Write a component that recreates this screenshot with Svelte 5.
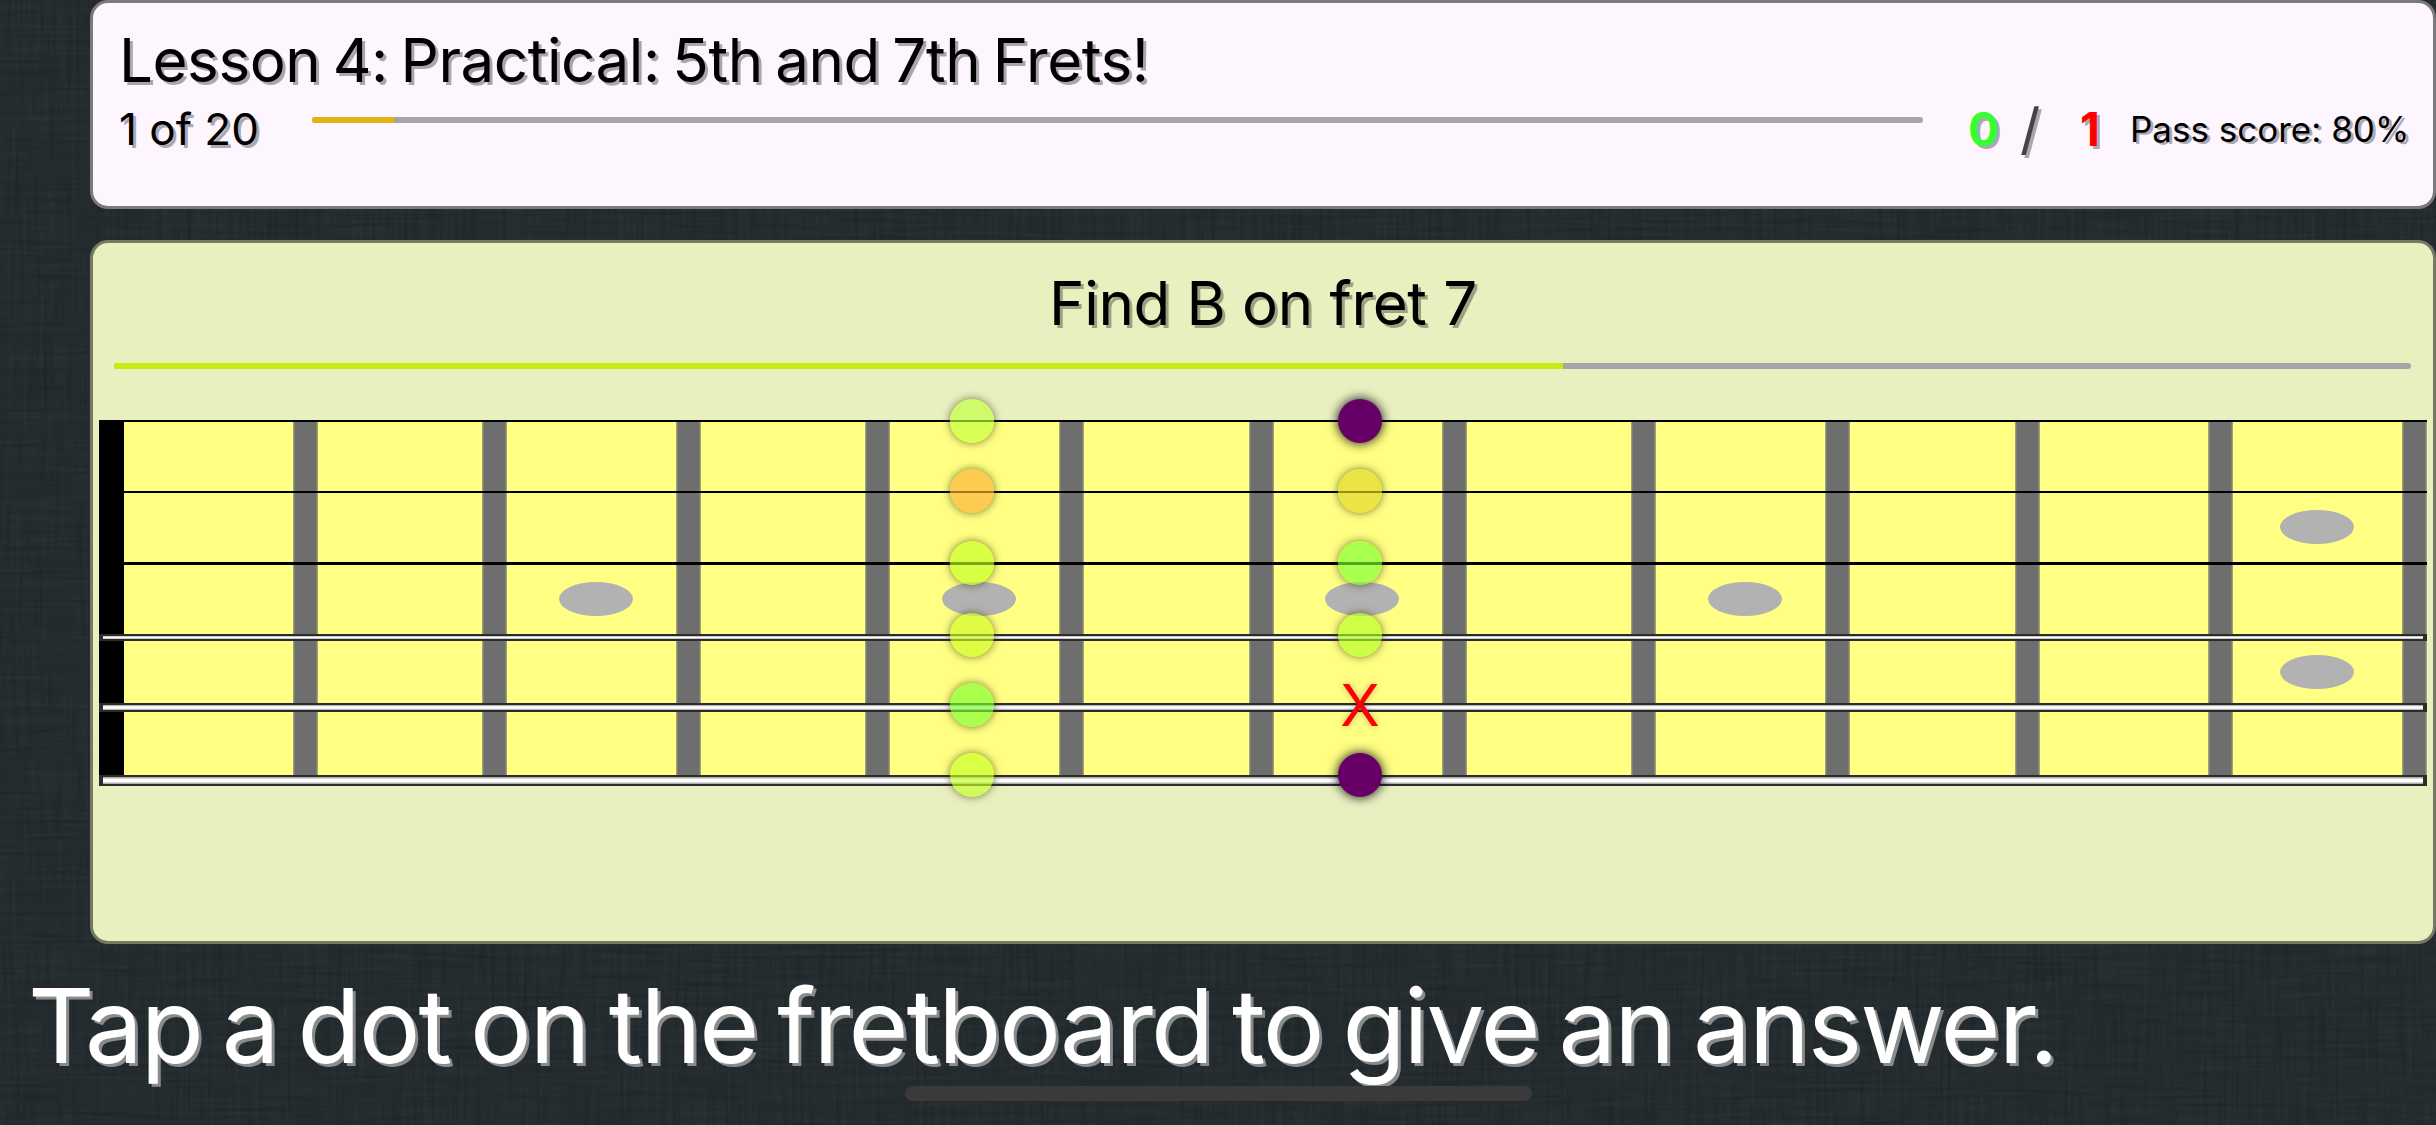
<script>
	// left edge of each fret, measured along the neck; last one closes the board
	const frets = [293, 482, 676, 865, 1059, 1249, 1442, 1631, 1825, 2015, 2208, 2402];
	const boardLeft = 99;
	const nutWidth = 25;
	const fretWidth = 25;

	const cells = frets.map((left, i) => {
		const start = i === 0 ? boardLeft + nutWidth : frets[i - 1] + fretWidth;
		return left - start;
	});

	const strings = [
		{ top: 0, height: 2, wound: false },
		{ top: 71, height: 2, wound: false },
		{ top: 142, height: 3, wound: false },
		{ top: 214, height: 7, wound: true },
		{ top: 283, height: 9, wound: true },
		{ top: 355, height: 11, wound: true }
	];

	const inlays = [
		{ x: 596, y: 179 },
		{ x: 979, y: 179 },
		{ x: 1362, y: 179 },
		{ x: 1745, y: 179 },
		{ x: 2317, y: 107 },
		{ x: 2317, y: 252 }
	];

	const rows = [1, 71, 143, 215, 285, 355];
	const colA = ['194,255,60', '252,175,52', '194,255,34', '208,249,34', '123,255,46', '198,255,38'];
	const colB = ['#660066', 'rgba(225,214,34,.65)', 'rgba(123,255,46,.65)', 'rgba(178,255,34,.65)', null, '#660066'];
</script>

<main class="screen">
	<svg class="weave" width="2436" height="1125" aria-hidden="true">
		<filter id="linen" x="0" y="0" width="100%" height="100%">
			<feTurbulence type="fractalNoise" baseFrequency="0.25 0.012" numOctaves="2" seed="4" result="warp" />
			<feTurbulence type="fractalNoise" baseFrequency="0.012 0.25" numOctaves="2" seed="9" result="weft" />
			<feBlend in="warp" in2="weft" mode="multiply" />
			<feColorMatrix type="matrix" values="0 0 0 0 .55  0 0 0 0 .68  0 0 0 0 .72  1.1 1.1 0 0 -.32" />
		</filter>
		<rect width="2436" height="1125" filter="url(#linen)" opacity=".07" />
	</svg>

	<section class="card header">
		<h1>Lesson 4: Practical: 5th and 7th Frets!</h1>
		<div class="status">
			<span class="count">1 of 20</span>
			<div class="bar lesson"><div class="bar-fill"></div></div>
			<div class="score">
				<span class="right">0</span>
				<span class="slash">/</span>
				<span class="wrong">1</span>
			</div>
			<span class="pass">Pass score: 80%</span>
		</div>
	</section>

	<section class="card game">
		<h2>Find B on fret 7</h2>
		<div class="bar timer"><div class="bar-fill"></div></div>

		<div class="board">
			<div class="nut"></div>
			{#each cells as width}
				<div class="cell" style="width: {width}px"></div>
				<div class="fret"></div>
			{/each}

			{#each inlays as dot}
				<div class="inlay" style="left: {dot.x - boardLeft}px; top: {dot.y}px"></div>
			{/each}

			{#each strings as s}
				<div class="string" class:wound={s.wound} style="top: {s.top}px; height: {s.height}px"></div>
			{/each}

			{#each rows as y, i}
				<button class="dot" style="left: 873px; top: {y}px; background: rgba({colA[i]},.65)" aria-label="answer"></button>
				{#if colB[i]}
					<button class="dot" class:picked={colB[i] === '#660066'} style="left: 1261px; top: {y}px; background: {colB[i]}" aria-label="answer"></button>
				{:else}
					<span class="miss" style="top: {y}px">X</span>
				{/if}
			{/each}
		</div>
	</section>

	<p class="prompt">Tap a dot on the fretboard to give an answer.</p>
	<div class="home"></div>
</main>

<style>
	:global(body) {
		margin: 0;
		background: #1d2428;
	}

	.screen {
		position: relative;
		box-sizing: border-box;
		width: 2436px;
		height: 1125px;
		overflow: hidden;
		padding-left: 90px;
		font-family: Inter, "Liberation Sans", sans-serif;
		background-color: #1d2428;
	}

	.weave {
		position: absolute;
		left: 0;
		top: 0;
	}

	.card {
		position: relative;
		box-sizing: border-box;
		width: 2346px;
		border: 3px solid;
		border-radius: 18px;
	}

	.header {
		height: 209px;
		padding: 22px 14px 0 26px;
		background: #fdf6fe;
		border-color: #7c787c;
		color: #000;
	}

	h1 {
		margin: 0;
		font-size: 60px;
		font-weight: 400;
		line-height: 70px;
		letter-spacing: -.4px;
		word-spacing: -4px;
		text-shadow: 3px 3px 0 rgba(0,0,0,.33);
	}

	.status {
		display: flex;
		align-items: flex-start;
		margin-top: 7px;
	}

	.count {
		width: 193px;
		font-size: 44px;
		line-height: 54px;
		text-shadow: 3px 3px 0 rgba(0,0,0,.33);
	}

	.bar {
		height: 6px;
		border-radius: 3px;
		background: #a7a5a7;
		overflow: hidden;
	}

	.bar-fill {
		height: 100%;
	}

	.lesson {
		width: 1611px;
		margin-top: 15px;
	}

	.lesson .bar-fill {
		width: 82px;
		background: #e3b215;
	}

	.score {
		display: flex;
		margin-left: 45px;
		font-size: 46px;
		line-height: 54px;
		font-weight: 700;
		text-shadow: 3px 3px 0 rgba(0,0,0,.33);
	}

	.right {
		color: #33ff33;
		width: 52px;
	}

	.slash {
		color: #444;
		font-size: 56px;
		font-weight: 400;
		width: 60px;
	}

	.wrong {
		color: #ff0000;
		width: 50px;
	}

	.pass {
		font-size: 35px;
		line-height: 54px;
		text-shadow: 3px 2px 0 rgba(0,0,0,.33);
	}

	.game {
		height: 704px;
		margin-top: 31px;
		background: #e9f0c0;
		border-color: #767a62;
	}

	h2 {
		margin: 24px 0 0;
		text-align: center;
		font-size: 60px;
		font-weight: 400;
		line-height: 72px;
		letter-spacing: -.3px;
		color: #000;
		text-shadow: 3px 3px 0 rgba(0,0,0,.33);
	}

	.timer {
		width: 2297px;
		margin: 24px 0 0 21px;
	}

	.timer .bar-fill {
		width: 1449px;
		background: #c6ec10;
	}

	.board {
		position: relative;
		display: flex;
		width: 2328px;
		height: 366px;
		margin: 51px 0 0 6px;
		background: #ffff84;
	}

	.nut {
		width: 25px;
		background: #000;
	}

	.cell {
		height: 100%;
	}

	.fret {
		width: 25px;
		background: linear-gradient(90deg, #b3b37a 0, #6e6e6e 2px, #6e6e6e calc(100% - 2px), #b3b37a 100%);
	}

	.inlay {
		position: absolute;
		width: 74px;
		height: 34px;
		margin: -17px 0 0 -37px;
		border-radius: 50%;
		background: #b2b2b2;
		filter: blur(.6px);
	}

	.string {
		position: absolute;
		left: 0;
		right: 0;
		background: #000;
	}

	.wound {
		box-sizing: border-box;
		border: solid #2c2c2c;
		border-width: 2px 4px;
		background: linear-gradient(#999, #fff 35%, #fff 65%, #999);
	}

	.dot {
		position: absolute;
		width: 44px;
		height: 44px;
		margin: -22px 0 0 -22px;
		padding: 0;
		border: 0;
		border-radius: 50%;
		box-shadow: 0 0 8px rgba(60,60,0,.7);
	}

	.picked {
		box-shadow: 0 0 12px #000;
	}

	.miss {
		position: absolute;
		left: 1261px;
		width: 44px;
		margin: -35px 0 0 -22px;
		text-align: center;
		font-size: 58px;
		line-height: 70px;
		font-weight: 400;
		color: #ff0000;
		text-shadow: 0 0 6px rgba(0,0,0,.3);
	}

	.prompt {
		position: relative;
		margin: 20px 0 0 -62px;
		font-size: 103px;
		line-height: 124px;
		letter-spacing: -2px;
		word-spacing: -7px;
		color: #fff;
		white-space: nowrap;
		text-shadow: 3px 3px 0 rgba(150,150,150,.9);
	}

	.home {
		position: absolute;
		left: 905px;
		top: 1086px;
		width: 627px;
		height: 15px;
		border-radius: 8px;
		background: #3a3a3a;
	}
</style>
